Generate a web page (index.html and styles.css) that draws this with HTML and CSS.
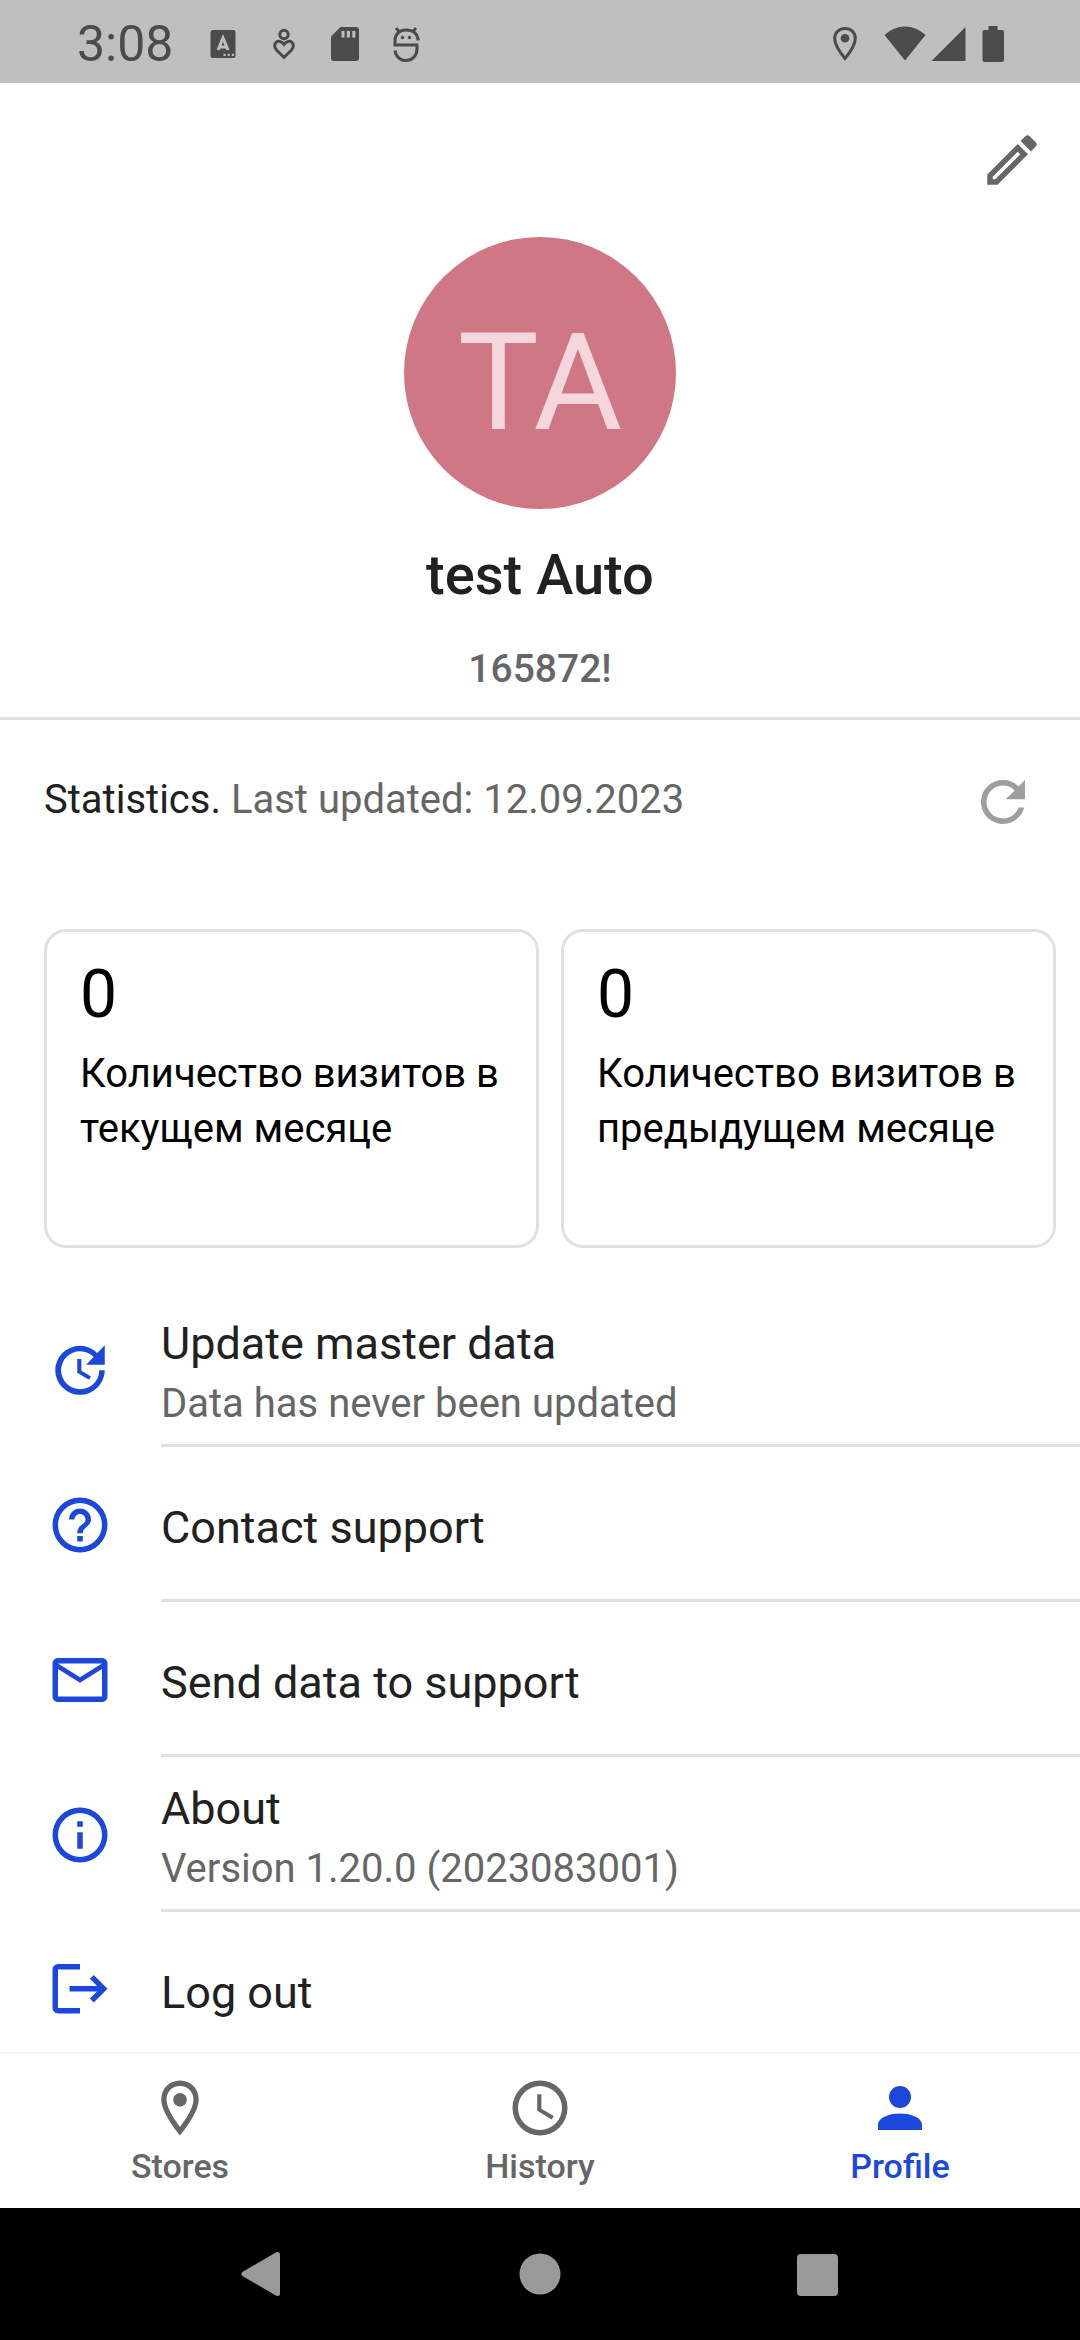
FILE: index.html
```html
<!DOCTYPE html>
<html lang="en">
<head>
<meta charset="utf-8">
<meta name="viewport" content="width=device-width, initial-scale=1">
<title>Profile</title>
<link rel="stylesheet" href="styles.css">
</head>
<body>
<div class="status-bar">
  <time class="clock">3:08</time>
  <div class="notifications">
    <svg viewBox="0 0 44 44" aria-hidden="true"><path fill-rule="evenodd" d="M12 8h20a2.500 2.500 0 0 1 2.500 2.500v23a2.500 2.500 0 0 1-2.500 2.500H12a2.500 2.500 0 0 1-2.500-2.500v-23A2.500 2.500 0 0 1 12 8z"/><path class="cut-line" d="M17 28 22 16l5 12M18.500 25h7"/><path class="cut" d="M22.500 31.800h2v2.200h-2zM26.700 31.800h2v2.200h-2zM30.900 31.800h2v2.200h-2z"/></svg>
    <svg viewBox="0 0 44 44" aria-hidden="true"><g class="line"><circle cx="22" cy="12.500" r="4.200"/><path d="M22 35.500 14.500 28C9 21.500 17 15.500 22 22.500c5-7 13-1 7.500 5.500z"/></g></svg>
    <svg viewBox="0 0 44 44" aria-hidden="true"><path d="M17.500 5H33a3 3 0 0 1 3 3v28a3 3 0 0 1-3 3H11a3 3 0 0 1-3-3V14.500z"/><path class="cut" d="M18.500 9h3v6.500h-3zM23.900 9h3v6.500h-3zM29.300 9h3v6.500h-3z"/></svg>
    <svg viewBox="0 0 44 44" aria-hidden="true"><g class="line"><path d="M34.200 18.500C33.500 11 28.500 8 22 8S11 12 11 18.500v4.500h22V27c0 7-5 11.500-11 11.500S11.500 34 11 28.500"/><path d="m12 6 3 3.500M32 6l-3 3.500"/></g><circle cx="18.500" cy="15.500" r="1.700"/><circle cx="25.500" cy="15.500" r="1.700"/></svg>
  </div>
  <div class="system">
    <svg class="pin" viewBox="0 0 44 44" aria-hidden="true"><path class="line" d="M22 36.500C17 30.500 11.700 23.500 11.700 16.300 11.700 10.500 16.300 6.500 22 6.500s10.300 4 10.300 9.800c0 7.200-5.300 14.200-10.300 20.200z"/><circle cx="22" cy="16.200" r="4.300"/></svg>
    <svg viewBox="0 0 44 44" aria-hidden="true"><path d="M1.500 13Q10.500 4.500 22 4.500T42.500 13L22 38.500z"/></svg>
    <svg viewBox="0 0 44 44" aria-hidden="true"><path d="M38.500 5v34h-34z"/></svg>
    <svg viewBox="0 0 44 44" aria-hidden="true"><path d="M17.500 4h9v4H31a2 2 0 0 1 2 2v28a2 2 0 0 1-2 2H13.500a2 2 0 0 1-2-2V10a2 2 0 0 1 2-2h4z"/></svg>
  </div>
</div>

<main class="screen">
  <header class="profile">
    <button class="icon-button edit" type="button" aria-label="Edit profile">
      <svg class="icon" viewBox="0 0 24 24"><path d="M14.060 9 15 9.940 5.920 19H5v-.920L14.060 9M17.660 3c-.250 0-.510.100-.700.290l-1.830 1.830 3.750 3.750 1.830-1.830c.390-.390.390-1.040 0-1.410l-2.340-2.340c-.200-.200-.450-.290-.710-.290m-3.600 3.190L3 17.250V21h3.750L17.810 9.940l-3.750-3.750z"/></svg>
    </button>
    <div class="avatar">TA</div>
    <h1 class="name">test Auto</h1>
    <p class="user-id">165872!</p>
  </header>

  <section class="statistics">
    <div class="stats-head">
      <h2 class="stats-title">Statistics. <span class="muted">Last updated: 12.09.2023</span></h2>
      <button class="icon-button refresh" type="button" aria-label="Refresh statistics">
        <svg class="icon" viewBox="0 0 24 24"><path d="M17.650 6.350A7.960 7.960 0 0 0 12 4a8 8 0 1 0 7.730 10h-2.080A6 6 0 1 1 12 6c1.660 0 3.140.690 4.220 1.780L13 11h7V4l-2.350 2.350z"/></svg>
      </button>
    </div>
    <div class="cards">
      <article class="card"><strong class="value">0</strong><p class="caption">Количество визитов в текущем месяце</p></article>
      <article class="card"><strong class="value">0</strong><p class="caption">Количество визитов в предыдущем месяце</p></article>
    </div>
  </section>

  <ul class="menu">
    <li><button class="row" type="button">
      <svg class="icon" viewBox="0 0 24 24" aria-hidden="true"><path d="M21 10.120h-6.780l2.740-2.820a6.900 6.900 0 0 0-9.790-.100 6.875 6.875 0 0 0 0 9.790 6.900 6.900 0 0 0 9.790 0C18.320 15.650 19 14.080 19 12.100h2c0 1.980-.880 4.550-2.640 6.290a9.050 9.050 0 0 1-12.720 0 8.850 8.850 0 0 1-.030-12.570 8.950 8.950 0 0 1 12.650 0L21 3v7.120zM12.500 8v4.250l3.500 2.080-.720 1.210L11 13V8h1.500z"/></svg>
      <span class="row-text"><span class="row-title">Update master data</span><span class="row-note">Data has never been updated</span></span>
    </button></li>
    <li><button class="row" type="button">
      <svg class="icon" viewBox="0 0 24 24" aria-hidden="true"><path d="M11 18h2v-2h-2v2zm1-16a10 10 0 1 0 0 20 10 10 0 0 0 0-20zm0 18a8 8 0 1 1 0-16 8 8 0 0 1 0 16zm0-14a4 4 0 0 0-4 4h2c0-1.100.900-2 2-2s2 .900 2 2c0 2-3 1.750-3 5h2c0-2.250 3-2.500 3-5a4 4 0 0 0-4-4z"/></svg>
      <span class="row-text"><span class="row-title">Contact support</span></span>
    </button></li>
    <li><button class="row" type="button">
      <svg class="icon" viewBox="0 0 24 24" aria-hidden="true"><path d="M22 6c0-1.100-.900-2-2-2H4c-1.100 0-2 .900-2 2v12c0 1.100.900 2 2 2h16c1.100 0 2-.900 2-2V6zm-2 0-8 5-8-5h16zm0 12H4V8l8 5 8-5v10z"/></svg>
      <span class="row-text"><span class="row-title">Send data to support</span></span>
    </button></li>
    <li><button class="row" type="button">
      <svg class="icon" viewBox="0 0 24 24" aria-hidden="true"><path d="M11 7h2v2h-2zm0 4h2v6h-2zm1-9a10 10 0 1 0 0 20 10 10 0 0 0 0-20zm0 18a8 8 0 1 1 0-16 8 8 0 0 1 0 16z"/></svg>
      <span class="row-text"><span class="row-title">About</span><span class="row-note">Version 1.20.0 (2023083001)</span></span>
    </button></li>
    <li><button class="row" type="button">
      <svg class="icon" viewBox="0 0 24 24" aria-hidden="true"><path d="M4 2.500h8v2H4v14h8v2H4a2 2 0 0 1-2-2v-14a2 2 0 0 1 2-2zM17 6.500l5 5-5 5-1.400-1.400 2.600-2.600H8.200v-2h10l-2.600-2.600z"/></svg>
      <span class="row-text"><span class="row-title">Log out</span></span>
    </button></li>
  </ul>
</main>

<nav class="tabs" aria-label="Main">
  <a class="tab" href="#stores">
    <svg class="icon" viewBox="0 0 24 24" aria-hidden="true"><path d="M12 2C8 2 5.200 5 5.200 9c0 5 6.800 13 6.800 13s6.800-8 6.800-13c0-4-2.800-7-6.800-7zm0 2c2.900 0 4.900 2.100 4.900 5 0 3-3 7.300-4.900 9.900C10.100 16.300 7.100 12 7.100 9c0-2.900 2-5 4.900-5z"/><circle cx="12" cy="9" r="2.500"/></svg>
    Stores
  </a>
  <a class="tab" href="#history">
    <svg class="icon" viewBox="0 0 24 24" aria-hidden="true"><path d="M12 2a10 10 0 1 0 0 20 10 10 0 0 0 0-20zm0 18a8 8 0 1 1 0-16 8 8 0 0 1 0 16zm.500-13H11v6l5.250 3.150.750-1.230-4.500-2.670V7z"/></svg>
    History
  </a>
  <a class="tab current" href="#profile" aria-current="page">
    <svg class="icon" viewBox="0 0 24 24" aria-hidden="true"><path d="M12 12a4 4 0 1 0 0-8 4 4 0 0 0 0 8zm0 2c-4.420 0-8 1.790-8 4v2h16v-2c0-2.210-3.580-4-8-4z"/></svg>
    Profile
  </a>
</nav>

<div class="system-nav">
  <button class="nav-button" type="button" aria-label="Back"><svg viewBox="0 0 66 66"><path class="soft" d="M15 33 48.500 13.500v39z"/></svg></button>
  <button class="nav-button" type="button" aria-label="Home"><svg viewBox="0 0 66 66"><circle cx="33" cy="33" r="20.500"/></svg></button>
  <button class="nav-button" type="button" aria-label="Recent apps"><svg viewBox="0 0 66 66"><rect x="12" y="13" width="41" height="42" rx="4"/></svg></button>
</div>
</body>
</html>
```
FILE: styles.css
```css
* {
  box-sizing: border-box;
}

:root {
  --ink: #212121;
  --muted: #666;
  --line: #e0e0e0;
  --accent: #1b48db;
}

body {
  margin: 0;
  height: 100vh;
  display: flex;
  flex-direction: column;
  background: #fff;
  color: var(--ink);
  font-family: Roboto, "Liberation Sans", sans-serif;
}

h1, h2, p, ul {
  margin: 0;
  padding: 0;
}

button {
  margin: 0;
  padding: 0;
  border: 0;
  background: none;
  color: inherit;
  font: inherit;
  text-align: left;
}

svg {
  display: block;
  fill: currentColor;
}

.icon {
  width: 66px;
  height: 66px;
}

/* Status bar */
.status-bar {
  flex: none;
  display: flex;
  align-items: center;
  height: 83px;
  padding: 4px 65px 0 77px;
  background: #bfbfbf;
  color: #4b4b4b;
}

.clock {
  width: 124px;
  font-size: 50px;
  line-height: 60px;
}

.notifications,
.system {
  display: flex;
}

.notifications {
  gap: 17px;
}

.system {
  margin-left: auto;
}

.status-bar svg {
  width: 44px;
  height: 44px;
}

.status-bar .pin {
  margin-right: 16px;
}

.line,
.cut-line {
  fill: none;
  stroke: currentColor;
  stroke-width: 3;
}

.cut-line {
  stroke: #bfbfbf;
}

.cut {
  fill: #bfbfbf;
}

/* Scrolling content */
.screen {
  flex: 1;
  min-height: 0;
  overflow: hidden;
}

.profile {
  display: flex;
  flex-direction: column;
  align-items: center;
  padding: 44px 35px 22px;
  border-bottom: 3px solid var(--line);
  text-align: center;
}

.edit {
  align-self: flex-end;
  color: var(--muted);
}

.avatar {
  width: 272px;
  height: 272px;
  margin-top: 44px;
  padding-top: 20px;
  border-radius: 50%;
  background: #d07785;
  color: #f3d7dc;
  font-size: 136px;
  line-height: 252px;
}

.name {
  margin-top: 33px;
  font-size: 56px;
  font-weight: 500;
  line-height: 66px;
}

.user-id {
  margin-top: 35px;
  color: var(--muted);
  font-size: 39px;
  font-weight: 500;
  line-height: 52px;
}

.statistics {
  padding: 49px 24px 0 44px;
}

.stats-head {
  display: flex;
  align-items: center;
  justify-content: space-between;
  padding-right: 20px;
}

.stats-title {
  padding-bottom: 4px;
  font-size: 40px;
  font-weight: 400;
  line-height: 60px;
}

.muted {
  color: var(--muted);
}

.refresh {
  color: #9e9e9e;
}

.cards {
  display: grid;
  grid-template-columns: 1fr 1fr;
  gap: 22px;
  margin-top: 94px;
}

.card {
  min-height: 319px;
  padding: 23px 33px;
  border: 3px solid var(--line);
  border-radius: 22px;
  color: #000;
}

.value {
  display: block;
  font-size: 66px;
  font-weight: 400;
  line-height: 80px;
}

.caption {
  margin-top: 11px;
  font-size: 40px;
  line-height: 55px;
}

/* Menu */
.menu {
  margin-top: 44px;
  list-style: none;
}

.row {
  display: flex;
  align-items: center;
  gap: 48px;
  width: 100%;
  height: 155px;
  padding-left: 47px;
}

.row .icon {
  flex: none;
  color: var(--accent);
}

.row-text {
  flex: 1;
  display: flex;
  flex-direction: column;
  justify-content: center;
  height: 100%;
  padding-top: 10px;
  border-bottom: 3px solid var(--line);
}

.row-title {
  font-size: 45px;
  line-height: 62px;
}

.row-note {
  color: var(--muted);
  font-size: 40px;
  line-height: 58px;
}

/* Tab bar */
.tabs {
  flex: none;
  display: grid;
  grid-template-columns: repeat(3, 1fr);
  height: 156px;
  border-top: 2px solid #f5f5f5;
}

.tab {
  display: flex;
  flex-direction: column;
  align-items: center;
  padding-top: 21px;
  color: var(--muted);
  font-size: 34px;
  font-weight: 500;
  line-height: 50px;
  text-decoration: none;
}

.tab.current {
  color: var(--accent);
}

/* Navigation buttons */
.system-nav {
  flex: none;
  display: flex;
  align-items: center;
  justify-content: center;
  gap: 212px;
  height: 132px;
  background: #000;
  color: #999;
}

.nav-button svg {
  width: 66px;
  height: 66px;
}

.soft {
  stroke: currentColor;
  stroke-width: 5;
  stroke-linejoin: round;
}
```
